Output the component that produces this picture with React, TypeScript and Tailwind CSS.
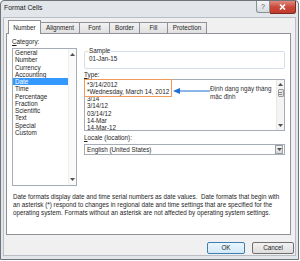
import React from "react";

const Up = () => (
  <svg width="5" height="3" viewBox="0 0 5 3"><path d="M0 3 L2.5 0 L5 3 Z" fill="#505050" /></svg>
);
const Down = () => (
  <svg width="5" height="3" viewBox="0 0 5 3"><path d="M0 0 L2.5 3 L5 0 Z" fill="#505050" /></svg>
);

const categories = [
  "General", "Number", "Currency", "Accounting", "Date", "Time", "Percentage",
  "Fraction", "Scientific", "Text", "Special", "Custom",
];
const types = [
  "*3/14/2012", "*Wednesday, March 14, 2012", "3/14", "3/14/12", "03/14/12", "14-Mar", "14-Mar-12",
];

export default function App() {
  return (
    <div className="w-[300px] h-[261px] bg-white overflow-hidden font-['Liberation_Sans',Arial,sans-serif] text-[6.3px] text-[#1e1e1e] leading-[8px]">
      <div className="w-[299px] h-[260px] border border-[#6f7478] rounded-t-[4px] bg-[#e2e6ea] flex flex-col">
        {/* title bar */}
        <div className="h-[16px] flex items-start shrink-0">
          <span className="ml-[3px] mt-[3px] text-[6.8px] text-[#222]">Format Cells</span>
          <div className="ml-auto mr-[2px] flex">
            <div className="w-[14px] h-[12px] border border-[#8a8f94] border-t-0 rounded-bl-[3px] bg-gradient-to-b from-[#f4f6f8] to-[#d7dbe0] flex items-center justify-center text-[7px] text-[#555]">
              ?
            </div>
            <div className="w-[26px] h-[13px] border border-[#7a2a22] border-t-0 border-l-0 rounded-br-[3px] bg-gradient-to-b from-[#e0897e] via-[#c9493b] to-[#c23a2c] flex items-center justify-center">
              <svg width="7" height="6" viewBox="0 0 7 6">
                <path d="M1 0.5 L6 5.5 M6 0.5 L1 5.5" stroke="#ffffff" strokeWidth="1.6" />
              </svg>
            </div>
          </div>
        </div>
        {/* client area */}
        <div className="ml-[2px] mr-[2px] mb-[3px] flex-1 bg-[#f0f0f0] border border-[#b9bec4] flex flex-col pl-[2px] pt-[2px]">
          {/* tabs */}
          <div className="flex items-end h-[14px] pl-[2px] relative z-10">
            <div className="w-[33px] h-[14px] bg-white border border-[#8e9298] border-b-0 flex items-center justify-center">Number</div>
            <div className="w-[40px] h-[11px] -ml-px mb-px bg-gradient-to-b from-[#f2f2f2] to-[#e0e0e0] border border-[#8e9298] border-b-0 flex items-center justify-center">Alignment</div>
            <div className="w-[31px] h-[11px] -ml-px mb-px bg-gradient-to-b from-[#f2f2f2] to-[#e0e0e0] border border-[#8e9298] border-b-0 flex items-center justify-center">Font</div>
            <div className="w-[31px] h-[11px] -ml-px mb-px bg-gradient-to-b from-[#f2f2f2] to-[#e0e0e0] border border-[#8e9298] border-b-0 flex items-center justify-center">Border</div>
            <div className="w-[29px] h-[11px] -ml-px mb-px bg-gradient-to-b from-[#f2f2f2] to-[#e0e0e0] border border-[#8e9298] border-b-0 flex items-center justify-center">Fill</div>
            <div className="w-[40px] h-[11px] -ml-px mb-px bg-gradient-to-b from-[#f2f2f2] to-[#e0e0e0] border border-[#8e9298] border-b-0 flex items-center justify-center">Protection</div>
          </div>
          {/* panel */}
          <div className="w-[285px] h-[202px] -mt-px bg-white border border-[#8e9298] flex flex-col pl-[5px] pt-[4px]">
            <div className="flex gap-[7px]">
              {/* left column */}
              <div className="flex flex-col">
                <div className="h-[8px]"><span className="underline">C</span>ategory:</div>
                <div className="mt-[2px] w-[65px] h-[138px] border border-[#a5acb5] flex">
                  <div className="flex-1 flex flex-col pt-0">
                    {categories.map((c) => (
                      <div
                        key={c}
                        className={
                          c === "Date"
                            ? "h-[7.27px] leading-[7.27px] pl-[2px] bg-[#3399ff] text-white"
                            : "h-[7.27px] leading-[7.27px] pl-[2px]"
                        }
                      >
                        {c}
                      </div>
                    ))}
                  </div>
                  <div className="w-[8px] flex flex-col items-center justify-between py-[4px] bg-[#fafafa] border-l border-[#f0f0f0]">
                    <Up />
                    <Down />
                  </div>
                </div>
              </div>
              {/* right column */}
              <div className="flex flex-col w-[201px]">
                <fieldset className="mt-[9px] h-[22px] border border-[#d5dfe5] rounded-[2px] px-[2px] pt-[4px]">
                  <legend className="ml-[1px] px-px leading-[8px]">Sample</legend>
                  <div className="pl-[2px] -mt-[4px]">01-Jan-15</div>
                </fieldset>
                <div className="mt-[2px] h-[8px]"><span className="underline">T</span>ype:</div>
                <div className="relative w-[201px] h-[52px] border border-[#a5acb5] flex">
                  <div className="flex-1 flex flex-col pt-[0.5px]">
                    {types.map((t, i) => (
                      <div key={i} className="h-[7.3px] leading-[7.3px] pl-[2px] whitespace-nowrap">
                        {t}
                      </div>
                    ))}
                  </div>
                  <div className="w-[8px] flex flex-col items-center py-[3px] bg-[#f4f4f4] border-l border-[#e8e8e8]">
                    <Up />
                    <div className="mt-[3px] w-[6px] h-[8px] border border-[#9a9a9a] rounded-[1px] bg-gradient-to-r from-[#f2f2f2] to-[#dcdcdc] flex flex-col items-center justify-center gap-px">
                      <div className="w-[3px] h-px bg-[#8a8a8a]" />
                      <div className="w-[3px] h-px bg-[#8a8a8a]" />
                    </div>
                    <div className="mt-auto"><Down /></div>
                  </div>
                  {/* annotation overlay */}
                  <div className="absolute -left-px -top-px w-[88px] h-[18px] border-[1.5px] border-[#f29a5a]" />
                  <svg className="absolute left-[88px] top-[8px]" width="38" height="6" viewBox="0 0 38 6">
                    <path d="M0 3 L7 0 L7 6 Z" fill="#1b6fd6" />
                    <path d="M6 3 L37 3" stroke="#1b6fd6" strokeWidth="1" />
                  </svg>
                  <div className="absolute left-[125px] top-[5px] text-[#333] leading-[8px] whitespace-nowrap">
                    Định dạng ngày tháng
                    <br />
                    mặc định
                  </div>
                </div>
                <div className="mt-[3px] h-[8px]"><span className="underline">L</span>ocale (location):</div>
                <div className="mt-[2px] h-[11px] border border-[#a5acb5] flex items-center">
                  <div className="flex-1 pl-[2px]">English (United States)</div>
                  <div className="w-[8px] h-[9px] mr-px border border-[#9a9fa5] bg-gradient-to-b from-[#f2f2f2] to-[#d8d8d8] flex items-center justify-center">
                    <Down />
                  </div>
                </div>
              </div>
            </div>
            {/* description */}
            <div className="mt-[7px] pl-[1px] leading-[8px] whitespace-nowrap">
              <div>Date formats display date and time serial numbers as date values.&nbsp; Date formats that begin with</div>
              <div>an asterisk (*) respond to changes in regional date and time settings that are specified for the</div>
              <div>operating system. Formats without an asterisk are not affected by operating system settings.</div>
            </div>
          </div>
          {/* buttons */}
          <div className="flex justify-end gap-[7px] mt-[7px] pr-[1px]">
            <div className="w-[38px] h-[12px] border border-[#3c7fb1] rounded-[2px] bg-gradient-to-b from-[#eaf6fd] to-[#d3e9f8] flex items-center justify-center">OK</div>
            <div className="w-[42px] h-[12px] border border-[#707070] rounded-[2px] bg-gradient-to-b from-[#f2f2f2] to-[#dddddd] flex items-center justify-center">Cancel</div>
          </div>
        </div>
      </div>
    </div>
  );
}
